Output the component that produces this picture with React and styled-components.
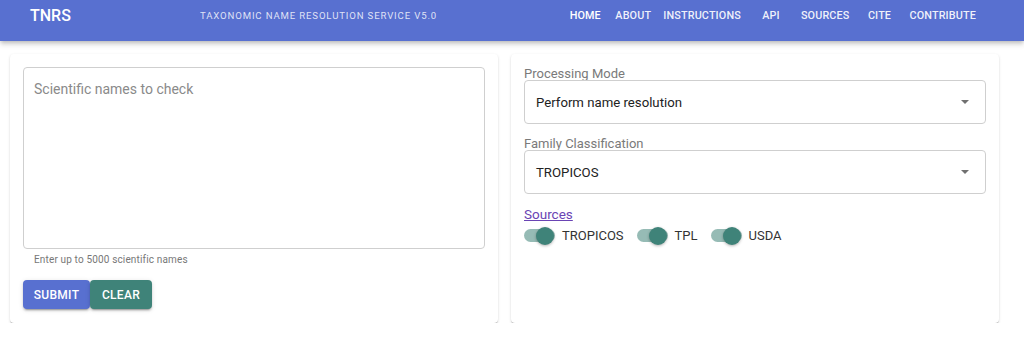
import React, { useState } from 'react';
import styled, { createGlobalStyle } from 'styled-components';

const GlobalStyle = createGlobalStyle`
  body {
    margin: 0;
    background: #fff;
    font-family: Roboto, "Liberation Sans", Arial, sans-serif;
  }
`;

const AppBar = styled.header`
  display: flex;
  align-items: center;
  height: 41px;
  padding: 0 42px 10px 30px;
  box-sizing: border-box;
  background: #5870d0;
  color: #fff;
  box-shadow: 0 2px 4px -1px rgba(0, 0, 0, 0.2), 0 4px 5px 0 rgba(0, 0, 0, 0.12);
  position: relative;
  z-index: 1;
`;

const Brand = styled.div`
  width: 170px;
  font-size: 16px;
  font-weight: 500;
  line-height: 1;
`;

const Subtitle = styled.div`
  font-size: 9.6px;
  letter-spacing: 0.85px;
  color: rgba(255, 255, 255, 0.82);
  line-height: 1;
`;

const Nav = styled.nav`
  display: flex;
  margin-left: auto;
`;

const NavButton = styled.a`
  min-width: 48px;
  padding: 0 6px;
  box-sizing: border-box;
  text-align: center;
  font-size: 10.8px;
  font-weight: 500;
  letter-spacing: 0.15px;
  color: ${(props) => (props.active ? '#fff' : 'rgba(255, 255, 255, 0.92)')};
  cursor: pointer;
`;

const Main = styled.main`
  display: grid;
  grid-template-columns: 1fr 1fr;
  gap: 13px;
  padding: 13px 25px 0 10px;
  align-items: stretch;
`;

const Card = styled.section`
  display: flex;
  flex-direction: column;
  box-sizing: border-box;
  padding: 13px 13px 14px;
  border-radius: 4px;
  background: #fff;
  box-shadow: 0 2px 1px -1px rgba(0, 0, 0, 0.2), 0 1px 1px 0 rgba(0, 0, 0, 0.14), 0 1px 3px 0 rgba(0, 0, 0, 0.12);
`;

const NamesArea = styled.textarea`
  flex-shrink: 0;
  height: 182px;
  box-sizing: border-box;
  padding: 13px 10px;
  border: 1px solid #cfcfcf;
  border-radius: 4px;
  resize: none;
  font-family: inherit;
  font-size: 14px;
  color: #222;
  outline: none;
  &::placeholder {
    color: #8a8a8a;
  }
`;

const Helper = styled.div`
  margin: 4px 0 0 11px;
  font-size: 10px;
  line-height: 14px;
  letter-spacing: 0.15px;
  color: #777;
`;

const ButtonRow = styled.div`
  display: flex;
  margin-top: 13px;
`;

const Button = styled.button`
  height: 29px;
  width: ${(props) => props.w}px;
  padding: 0;
  border: none;
  border-radius: 4px;
  background: ${(props) => props.color};
  color: #fff;
  font-family: inherit;
  font-size: 12px;
  font-weight: 500;
  letter-spacing: 0.3px;
  box-shadow: 0 3px 1px -2px rgba(0, 0, 0, 0.2), 0 2px 2px 0 rgba(0, 0, 0, 0.14), 0 1px 5px 0 rgba(0, 0, 0, 0.12);
  cursor: pointer;
`;

const FieldLabel = styled.div`
  margin-top: ${(props) => props.top}px;
  font-size: 13px;
  line-height: 13px;
  color: #7a7a7a;
`;

const SelectBox = styled.div`
  display: flex;
  align-items: center;
  justify-content: space-between;
  height: 44px;
  box-sizing: border-box;
  padding: 0 10px 0 11px;
  border: 1px solid #cfcfcf;
  border-radius: 4px;
  font-size: 13.2px;
  color: #222;
`;

const Arrow = styled.span`
  width: 0;
  height: 0;
  margin-right: 6px;
  border-left: 4px solid transparent;
  border-right: 4px solid transparent;
  border-top: 4px solid #707070;
`;

const SourcesLink = styled.a`
  margin-top: 12px;
  font-size: 13.5px;
  line-height: 16px;
  color: #6a44b4;
  text-decoration: underline;
  align-self: flex-start;
`;

const SwitchRow = styled.div`
  display: flex;
  align-items: center;
  gap: 13px;
  margin-top: 6px;
`;

const SwitchItem = styled.label`
  display: flex;
  align-items: center;
  gap: 7px;
  font-size: 13px;
  color: #333;
  cursor: pointer;
`;

const Track = styled.span`
  position: relative;
  width: 31px;
  height: 13px;
  border-radius: 7px;
  background: ${(props) => (props.on ? 'rgba(63, 131, 121, 0.55)' : 'rgba(0, 0, 0, 0.3)')};
`;

const Thumb = styled.span`
  position: absolute;
  top: -2px;
  left: ${(props) => (props.on ? '12px' : '-2px')};
  width: 18px;
  height: 18px;
  border-radius: 50%;
  background: ${(props) => (props.on ? '#3f8379' : '#f5f5f5')};
  box-shadow: 0 1px 3px rgba(0, 0, 0, 0.3);
`;

const navItems = ['HOME', 'ABOUT', 'INSTRUCTIONS', 'API', 'SOURCES', 'CITE', 'CONTRIBUTE'];

function Toggle({ label, on, onClick }) {
  return (
    <SwitchItem onClick={onClick}>
      <Track on={on}>
        <Thumb on={on} />
      </Track>
      {label}
    </SwitchItem>
  );
}

export default function App() {
  const [sources, setSources] = useState({ TROPICOS: true, TPL: true, USDA: true });
  const [names, setNames] = useState('');

  const flip = (key) => setSources({ ...sources, [key]: !sources[key] });

  return (
    <>
      <GlobalStyle />
      <AppBar>
        <Brand>TNRS</Brand>
        <Subtitle>TAXONOMIC NAME RESOLUTION SERVICE V5.0</Subtitle>
        <Nav>
          {navItems.map((item) => (
            <NavButton key={item} active={item === 'HOME'}>{item}</NavButton>
          ))}
        </Nav>
      </AppBar>
      <Main>
        <Card>
          <NamesArea
            placeholder="Scientific names to check"
            value={names}
            onChange={(e) => setNames(e.target.value)}
          />
          <Helper>Enter up to 5000 scientific names</Helper>
          <ButtonRow>
            <Button color="#5870d0" w={67}>SUBMIT</Button>
            <Button color="#3f8379" w={62}>CLEAR</Button>
          </ButtonRow>
        </Card>
        <Card>
          <FieldLabel top={0}>Processing Mode</FieldLabel>
          <SelectBox>
            Perform name resolution
            <Arrow />
          </SelectBox>
          <FieldLabel top={13}>Family Classification</FieldLabel>
          <SelectBox>
            TROPICOS
            <Arrow />
          </SelectBox>
          <SourcesLink href="#">Sources</SourcesLink>
          <SwitchRow>
            {Object.keys(sources).map((key) => (
              <Toggle key={key} label={key} on={sources[key]} onClick={() => flip(key)} />
            ))}
          </SwitchRow>
        </Card>
      </Main>
    </>
  );
}
